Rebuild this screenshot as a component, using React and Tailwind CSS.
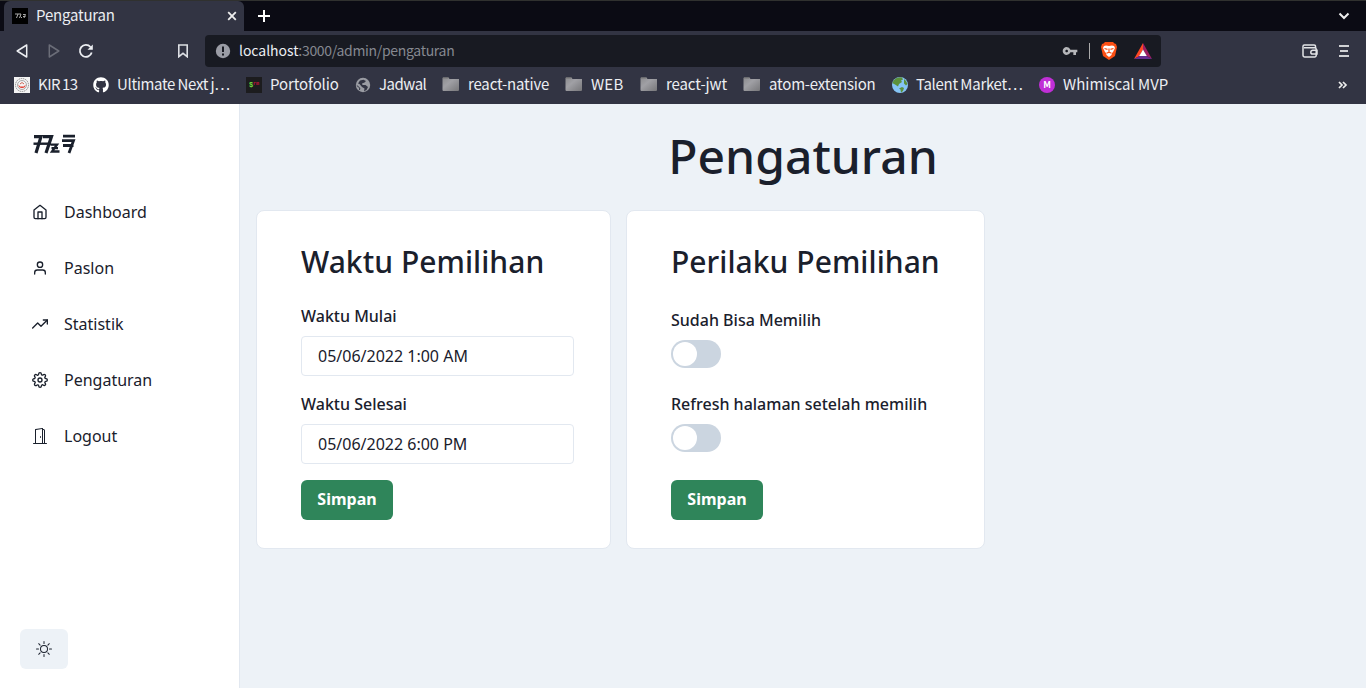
import { FiHome, FiUser, FiTrendingUp, FiSettings } from "react-icons/fi";
import { BsDoorOpen, BsSun } from "react-icons/bs";
import { FaGithub } from "react-icons/fa";
import { MdVpnKey } from "react-icons/md";

function Folder() {
  return (
    <svg width="18" height="16" viewBox="0 0 18 16">
      <defs>
        <linearGradient id="fold" x1="0" y1="0" x2="1" y2="1">
          <stop offset="0" stopColor="#8b8b8e" />
          <stop offset="0.4" stopColor="#a0a0a5" />
          <stop offset="1" stopColor="#77777a" />
        </linearGradient>
      </defs>
      <path d="M1 .5h5.5l1 1.500H17v11a1 1 0 0 1-1 1H1.500a1 1 0 0 1-1-1V1z" fill="url(#fold)" />
      <path d="M1 1h5.500" stroke="#777" />
    </svg>
  );
}

function Earth() {
  return (
    <svg width="16" height="16" viewBox="0 0 16 16">
      <circle cx="8" cy="8" r="8" fill="#85c4f5" />
      <path d="M2 3Q5-.5 10 .5l1 2-2 1 1 1.500-3 2-1 2.500-3-2L.3 6z" fill="#5c913b" />
      <path d="M12 2l2 2 1.500 3-1.500 1.500-2-2zM7 11.500l3-1.500 2 1-1 3-2 1.500-.5-3z" fill="#5c913b" />
    </svg>
  );
}

function Globe() {
  return (
    <svg width="16" height="16" viewBox="0 0 16 16">
      <circle cx="8" cy="8" r="7.200" fill="#9a9ca3" />
      <path d="M8.500 2.800L11 4l-1.500 1.500L7 6.500l.5 1.500h3l2.500 2-1.500 3-2.500 1.200.5-2.700-2.500-1.500L4.500 7 3 6.500l2-3z" fill="#323443" />
      <path d="M1.800 8.500l3 2.500-.3 2" stroke="#323443" fill="none" />
    </svg>
  );
}

function Kir() {
  return (
    <svg width="16" height="16" viewBox="0 0 16 16">
      <path d="M0 0h16v16H0z" fill="#f4f4f4" />
      <circle cx="8" cy="8" r="6.500" fill="none" stroke="#8c8c8c" strokeDasharray="1.500 .7" />
      <circle cx="8" cy="8" r="4.500" fill="none" stroke="#a9a9a9" />
      <path d="M4.500 7.500q0 3.500 3.500 3.500t3.500-3.500l-1.500 2H6z" fill="#e0382a" />
      <path d="M6 7l2-1.500L10 7" stroke="#c65" fill="none" />
    </svg>
  );
}

const bookmarks = [
  { text: "KIR 13", box: "w-[79px]", label: "tracking-[-0.5px] [word-spacing:-1px]", icon: <Kir /> },
  { text: "Ultimate Next j…", box: "w-[153px]", label: "tracking-[-0.33px] [word-spacing:-0.5px]", icon: <FaGithub size={16} color="#fff" /> },
  {
    text: "Portofolio", box: "w-[109px]", label: "tracking-[-0.1px]",
    icon: (
      <span className="flex h-4 w-4 items-center justify-center bg-[#1c1c1e] font-['Liberation_Mono'] text-[7px] font-bold text-[#6fdc3c]">
        $<span className="text-[5px] text-[#c3123c]">rm</span>
      </span>
    ),
  },
  { text: "Jadwal", box: "w-[87px]", label: "tracking-[-0.5px]", icon: <Globe /> },
  { text: "react-native", box: "w-[123px]", label: "tracking-[-0.18px]", icon: <Folder /> },
  { text: "WEB", box: "w-[75px]", label: "tracking-[0.2px]", icon: <Folder /> },
  { text: "react-jwt", box: "w-[103px]", label: "tracking-[-0.1px]", icon: <Folder /> },
  { text: "atom-extension", box: "w-[149px]", label: "tracking-[-0.2px]", icon: <Folder /> },
  { text: "Talent Market…", box: "w-[147px]", label: "tracking-[-0.3px] [word-spacing:-0.5px]", icon: <Earth /> },
  {
    text: "Whimiscal MVP", box: "w-[140px]", label: "",
    icon: <span className="flex h-4 w-4 items-center justify-center rounded-full bg-[#c02fd6] text-[9px] font-bold text-white">M</span>,
  },
];

function Browser() {
  return (
    <header className="h-[104px] bg-[#323443] font-['Noto_Sans_CJK_SC','Noto_Sans',sans-serif] text-[15px] text-[#eceef2]">
      <div className="flex h-[31px] border-t border-[#30312f] bg-[#0b0b14]">
        <div className="ml-1 flex w-60 items-center rounded-t-[6px] bg-[#323443] pr-1.5 pl-2">
          <span className="flex h-4 w-4 items-center justify-center bg-black text-white">
            <svg width="11" height="6" viewBox="0 0 11 6" stroke="#aaa" fill="none">
              <path d="M0 1h3L1.500 5M3 1h3L4.500 5M5.500 3.500L7 5M8 1.500h2.500L9 5M8 3.500h2.500" />
            </svg>
          </span>
          <span className="ml-2 flex-1 pb-0.5 text-[15px] leading-[28px] tracking-[-0.2px]">Pengaturan</span>
          <svg width="12" height="12" viewBox="0 0 12 12" stroke="#eee" strokeWidth="1.800">
            <path d="M2.200 2.200l7.600 7.600M9.800 2.200L2.200 9.800" />
          </svg>
        </div>
        <svg className="mt-[9px] ml-3.5" width="12" height="12" viewBox="0 0 12 12" stroke="#fff" strokeWidth="2">
          <path d="M0 6h12M6 0v12" />
        </svg>
        <svg className="mt-[11px] mr-4 ml-auto" width="12" height="8" viewBox="0 0 12 8" stroke="#eee" strokeWidth="2" fill="none">
          <path d="M1.500 1.500L6 6l4.500-4.500" />
        </svg>
      </div>
      <div className="flex h-[40px] items-center pl-4">
        <svg width="12" height="14" viewBox="0 0 12 14" fill="none" stroke="#eceef2" strokeWidth="1.500" strokeLinejoin="round">
          <path d="M10.700 1v12L1.200 7z" />
        </svg>
        <svg className="ml-5" width="12" height="14" viewBox="0 0 12 14" fill="none" stroke="#6b6d78" strokeWidth="1.500" strokeLinejoin="round">
          <path d="M1.300 1v12l9.500-6z" />
        </svg>
        <svg className="ml-[18px]" width="16" height="16" viewBox="0 0 16 16" fill="none" stroke="#eceef2" strokeWidth="1.800">
          <path d="M13.700 9.500A6 6 0 1 1 12.500 4" />
          <path d="M14.800 1.500v5.300H9.500z" fill="#eceef2" stroke="none" />
        </svg>
        <svg className="ml-[83px]" width="12" height="14" viewBox="0 0 12 14" fill="none" stroke="#dddfe4" strokeWidth="1.600">
          <path d="M1.800 1h8.400v11.700L6 9.300l-4.200 3.400z" />
        </svg>
        <div className="ml-4 flex h-8 w-[956px] items-center rounded bg-[#181a22] pl-2.5">
          <svg width="16" height="16" viewBox="0 0 16 16">
            <circle cx="8" cy="8" r="7.200" fill="#9a9ca5" />
            <path d="M7 3.500h2v5.500H7zM7 10.500h2v2H7z" fill="#181a22" />
          </svg>
          <span className="ml-2 w-[216px] pb-px text-[14px] tracking-[-0.32px] whitespace-nowrap text-[#858890]">
            <span className="tracking-[-0.05px] text-[#eceef2]">localhost</span>:3000/admin/pengaturan
          </span>
          <MdVpnKey className="ml-auto" size={16} color="#b5b6b9" />
          <span className="mr-[11px] ml-[11px] h-4 w-px bg-[#aaa]" />
          <svg width="16" height="18" viewBox="0 0 16 18">
            <path d="M4 0h8l1.500 1.500L15 2l1 3-2 9-6 4-6-4L0 5l1-3 1.500-.5z" fill="#fb4f14" />
            <path d="M3 4l2-.5 3 .5 3-.5 2 .5 1 2-2 4-1 1-.5 2L8 15l-2.500-2L5 11l-1-1-2-4z" fill="#fff" />
            <path d="M3.500 6.500l3 .8M12.500 6.500l-3 .8M8 6.500V10M5.500 11.300L8 10.200l2.500 1.100" stroke="#fb4f14" fill="none" strokeWidth="1.200" />
          </svg>
          <svg className="mr-[9px] ml-[17px]" width="18" height="16" viewBox="0 0 18 16">
            <path d="M9 0L0 16l5.500-3L9 6.500z" fill="#ff4724" />
            <path d="M9 0l9 16-5.500-3L9 6.500z" fill="#9e1f63" />
            <path d="M0 16h18l-5.500-3h-7z" fill="#662d91" />
            <path d="M9 6.500l3.800 6.600H5.200z" fill="#fff" />
          </svg>
        </div>
        <svg className="ml-[141px]" width="16" height="14" viewBox="0 0 16 14" fill="none" stroke="#e2e3e6" strokeWidth="1.500">
          <path d="M13.500 3.500V2.300A1.300 1.300 0 0 0 12.200 1H2.300A1.400 1.400 0 0 0 1 2.300v9a1.700 1.700 0 0 0 1.700 1.700h10a1.500 1.500 0 0 0 1.500-1.500V5A1.400 1.400 0 0 0 13 3.700H2M15 6.300h-4.300a1.900 1.900 0 0 0 0 3.800H15z" />
        </svg>
        <svg className="ml-[21px]" width="10" height="12" viewBox="0 0 10 12" stroke="#d0d1d4" strokeWidth="1.800">
          <path d="M0 1h10M1 6h8M0 11h10" />
        </svg>
      </div>
      <div className="flex h-[28px] items-center pl-[14px]">
        {bookmarks.map((b) => (
          <div key={b.text} className={`flex shrink-0 items-center ${b.box}`}>
            {b.icon}
            <span className={`ml-2 pb-0.5 whitespace-nowrap ${b.label}`}>{b.text}</span>
          </div>
        ))}
        <svg className="mr-[18px] ml-auto" width="10" height="8" viewBox="0 0 10 8" fill="none" stroke="#eee" strokeWidth="1.700">
          <path d="M1 1l3 3-3 3M5 1l3 3-3 3" />
        </svg>
      </div>
    </header>
  );
}

const nav = [
  [FiHome, "Dashboard"],
  [FiUser, "Paslon"],
  [FiTrendingUp, "Statistik"],
  [FiSettings, "Pengaturan"],
  [BsDoorOpen, "Logout"],
];

function Sidebar() {
  return (
    <aside className="flex w-60 flex-col border-r border-[#e2e8f0] bg-white">
      <div className="flex h-20 items-center pl-8">
        <svg width="44" height="20" viewBox="0 0 44 20" fill="none" stroke="#1a202c" strokeWidth="3.200">
          <path d="M2 2.600H9L4 19M11 2.600h8.500L14 19" />
          <path d="M1.500 9.700h17.500" strokeWidth="2.400" />
          <path d="M18.500 10.700h6.500l-5 6.800h7.500M19.500 14.200h6.500" strokeWidth="2.300" />
          <path d="M31 2.100h12M30 6.700h11.500L37 19M31 11.500h10.500" strokeWidth="2.800" />
        </svg>
      </div>
      <nav>
        {nav.map(([Icon, text]) => (
          <a key={text} className="flex h-14 items-center gap-4 pl-8">
            <Icon size={16} />
            <span>{text}</span>
          </a>
        ))}
      </nav>
      <button className="mt-auto mb-[19px] ml-5 flex h-10 w-12 items-center justify-center rounded-md bg-[#edf2f7]">
        <BsSun size={16} />
      </button>
    </aside>
  );
}

function Field({ label, value }) {
  return (
    <div>
      <label className="mb-2 block font-medium">{label}</label>
      <div className="flex h-10 w-[273px] items-center rounded border border-[#e2e8f0] px-4">{value}</div>
    </div>
  );
}

function Toggle({ label }) {
  return (
    <div>
      <label className="mb-2 block font-medium">{label}</label>
      <div className="h-7 w-[50px] rounded-full bg-[#cbd5e0] p-0.5">
        <div className="h-6 w-6 rounded-full bg-white" />
      </div>
    </div>
  );
}

function Save() {
  return <button className="flex h-10 w-[92px] items-center justify-center rounded-md bg-[#2f855a] pb-0.5 font-bold text-white">Simpan</button>;
}

export default function App() {
  return (
    <div className="h-[688px] w-[1366px] overflow-hidden">
      <Browser />
      <div className="flex h-[584px] bg-[#edf2f7] font-['Noto_Sans',sans-serif] text-base text-[#1a202c]">
        <Sidebar />
        <main className="flex-1 px-4 pt-6">
          <h1 className="text-center text-5xl leading-[56px] font-medium">Pengaturan</h1>
          <div className="mt-[26px] flex gap-[15px]">
            <section className="h-[339px] w-[355px] rounded-lg border border-[#e2e8f0] bg-white pt-[33px] pl-11">
              <h2 className="text-[30px] leading-9 font-medium tracking-[0.04px]">Waktu Pemilihan</h2>
              <div className="mt-6 mb-4 flex flex-col gap-4">
                <Field label="Waktu Mulai" value="05/06/2022 1:00 AM" />
                <Field label="Waktu Selesai" value="05/06/2022 6:00 PM" />
              </div>
              <Save />
            </section>
            <section className="h-[339px] w-[359px] rounded-lg border border-[#e2e8f0] bg-white pt-[33px] pl-11">
              <h2 className="text-[30px] leading-9 font-medium tracking-[0.04px]">Perilaku Pemilihan</h2>
              <div className="mt-7 mb-7 flex flex-col gap-6">
                <Toggle label="Sudah Bisa Memilih" />
                <Toggle label="Refresh halaman setelah memilih" />
              </div>
              <Save />
            </section>
          </div>
        </main>
      </div>
    </div>
  );
}
